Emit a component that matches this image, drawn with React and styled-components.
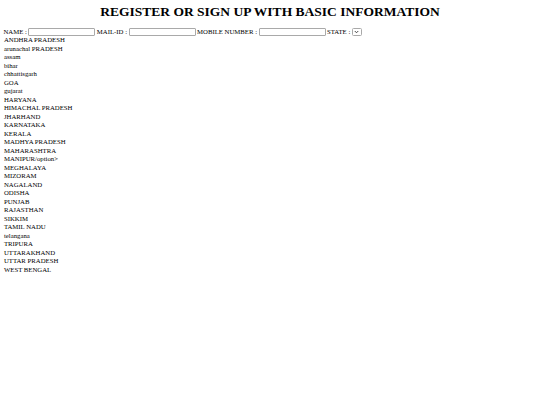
import styled, { createGlobalStyle } from "styled-components";

const states = [
  "ANDHRA PRADESH",
  "arunachal PRADESH",
  "assam",
  "bihar",
  "chhattisgarh",
  "GOA",
  "gujarat",
  "HARYANA",
  "HIMACHAL PRADESH",
  "JHARHAND",
  "KARNATAKA",
  "KERALA",
  "MADHYA PRADESH",
  "MAHARASHTRA",
  "MANIPUR/option>",
  "MEGHALAYA",
  "MIZORAM",
  "NAGALAND",
  "ODISHA",
  "PUNJAB",
  "RAJASTHAN",
  "SIKKIM",
  "TAMIL NADU",
  "telangana",
  "TRIPURA",
  "UTTARAKHAND",
  "UTTAR PRADESH",
  "WEST BENGAL",
];

const GlobalStyle = createGlobalStyle`
  html, body {
    margin: 0;
    background: #ffffff;
  }
  body {
    padding: 0 3.4px;
    font-family: "Liberation Serif", "Times New Roman", serif;
    font-size: 6.75px;
    line-height: 8.5px;
    color: #000000;
  }
`;

function App() {
  return (
    <>
      <GlobalStyle />
      <Page>
        <Title>REGISTER OR SIGN UP WITH BASIC INFORMATION</Title>
        <Form>
          <Label>NAME :</Label>
          <Field type="text" />
          <Label>MAIL-ID :</Label>
          <Field type="text" />
          <Label>MOBILE NUMBER :</Label>
          <Field type="text" />
          <Label>STATE :</Label>
          <Dropdown>
            <svg width="5" height="4" viewBox="0 0 10 8">
              <path d="M1.5 2 L5 5.5 L8.5 2" fill="none" stroke="#333" strokeWidth="1.8" />
            </svg>
          </Dropdown>
        </Form>
        <StateList>
          {states.map((s) => (
            <StateItem key={s}>{s}</StateItem>
          ))}
        </StateList>
      </Page>
    </>
  );
}

export default App;

const Page = styled.div`
    display: flex;
    flex-direction: column;
  `,
  Title = styled.h1`
    margin: 4px 0 9px;
    font-size: 13.5px;
    line-height: 15px;
    font-weight: bold;
    text-align: center;
  `,
  Form = styled.form`
    display: flex;
    align-items: center;
    height: 8px;
    line-height: 8px;
    margin: 0;
  `,
  Label = styled.span`
    margin-right: 1.5px;
    white-space: pre;
  `,
  Field = styled.input`
    box-sizing: border-box;
    width: 67px;
    height: 8px;
    margin: 0 1.5px 0 0;
    padding: 0;
    border: 1px solid #a9a9a9;
    border-radius: 1px;
    background: #ffffff;
    outline: none;
  `,
  Dropdown = styled.span`
    box-sizing: border-box;
    display: inline-flex;
    align-items: center;
    justify-content: center;
    width: 10px;
    height: 8px;
    border: 1px solid #a9a9a9;
    border-radius: 1.5px;
    background: #ffffff;
  `,
  StateList = styled.div`
    display: flex;
    flex-direction: column;
    padding-left: 0.5px;
  `,
  StateItem = styled.div`
    height: 8.5px;
    white-space: nowrap;
  `;
